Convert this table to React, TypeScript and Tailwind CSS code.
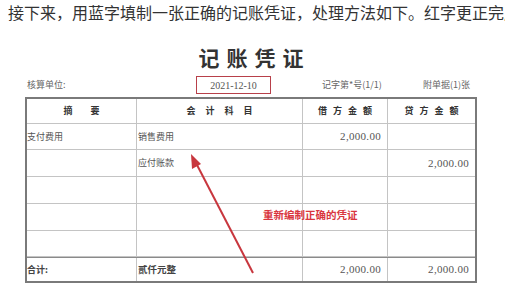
const cjk = "font-['Noto_Sans_CJK_SC',sans-serif]"

function Row({ h, last, cells }: { h: string; last?: boolean; cells: React.ReactNode[] }) {
  return (
    <div
      className={`grid grid-cols-[110px_166px_85px_87px] ${h} ${last ? '' : 'border-b border-[#c4c4c4]'}`}
    >
      {cells.map((c, i) => (
        <div
          key={i}
          className={`flex items-center overflow-hidden ${i < 3 ? 'border-r border-[#c4c4c4]' : ''}`}
        >
          {c}
        </div>
      ))}
    </div>
  )
}

const amt = (
  <span className="ml-auto pr-[6px] font-['Liberation_Serif',serif] text-[11px] tracking-[0.3px] text-[#555]">
    2,000.00
  </span>
)

export default function App() {
  return (
    <div className={`relative h-[284px] w-[505px] overflow-hidden bg-white ${cjk}`}>
      <p className="h-6 whitespace-nowrap pl-2 text-[16px] leading-6 text-[#333]">
        接下来，用蓝字填制一张正确的记账凭证，处理方法如下。红字更正完成
      </p>

      <div className="ml-[25px] w-[452px]">
        <div className="mt-[19px] h-7 pl-[7px] text-center text-[21px] font-bold leading-7 tracking-[7px] text-[#333]">
          记账凭证
        </div>

        <div className="mt-[5px] flex h-[18px] items-center text-[9px] text-[#666]">
          <span className="w-[171px] pl-[2px]">核算单位:</span>
          <span className="flex h-[18px] w-[75px] items-center justify-center border-[1.5px] border-[#b8404a] font-['Liberation_Serif',serif] text-[10px] text-[#555]">
            2021-12-10
          </span>
          <span className="ml-[51px] w-[101px]">记字第*号(1/1)</span>
          <span>附单据(1)张</span>
        </div>

        <div className="mt-[3px] border-2 border-[#7a7a7a] text-[9px] text-[#555]">
          <Row
            h="h-[25px]"
            cells={[
              <span className="flex w-full justify-center gap-[18px] font-bold text-[#333]">
                <span>摘</span>
                <span>要</span>
              </span>,
              <span className="w-full pl-[10px] text-center font-bold tracking-[10px] text-[#333]">会计科目</span>,
              <span className="w-full pl-[6px] text-center font-bold tracking-[6px] text-[#333]">借方金额</span>,
              <span className="w-full pl-[6px] text-center font-bold tracking-[6px] text-[#333]">贷方金额</span>,
            ]}
          />
          <Row
            h="h-[26px]"
            cells={[<span className="pl-0">支付费用</span>, <span className="pl-[1px]">销售费用</span>, amt, null]}
          />
          <Row h="h-[27px]" cells={[null, <span className="pl-[1px]">应付账款</span>, null, amt]} />
          <Row h="h-[27px]" cells={[null, null, null, null]} />
          <Row h="h-[27px]" cells={[null, null, null, null]} />
          <Row h="h-[26px]" cells={[null, null, null, null]} />
          <div className="border-t border-[#8a8a8a]">
            <Row
              h="h-[23px]"
              last
              cells={[
                <span className="font-bold text-[#444]">合计:</span>,
                <span className="pl-[1px] text-[9.5px] font-bold text-[#444]">贰仟元整</span>,
                amt,
                amt,
              ]}
            />
          </div>
        </div>
      </div>

      <svg className="pointer-events-none absolute left-0 top-0" width="505" height="284">
        <line x1="253" y1="273" x2="196" y2="163" stroke="#c8373e" strokeWidth="2" />
        <polygon points="191,154 192,169 201,164" fill="#c8373e" />
      </svg>

      <div className="absolute left-[263px] top-[207px] text-[10.5px] font-bold text-[#d9363e]">
        重新编制正确的凭证
      </div>
    </div>
  )
}
